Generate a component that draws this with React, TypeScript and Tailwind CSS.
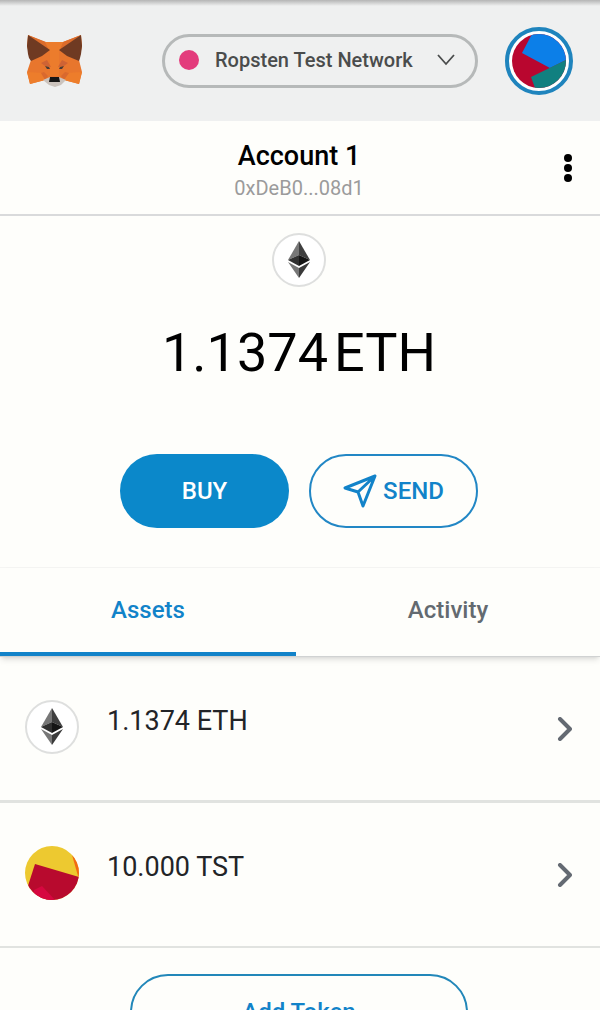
import React, { useState } from "react";

interface Asset {
  id: string;
  balance: string;
  icon: React.ReactNode;
}

const FoxLogo = () => (
  <svg viewBox="0 0 62 58" className="h-[58px] w-[62px]" aria-hidden="true">
    <polygon points="4,3 21,10 39,10 57,3 58,14 55,28 58,40 55,52 40,48 36,53 26,53 21,48 6,52 3,40 7,28 3,14" fill="#e8762d" />
    <polygon points="4,3 22,10 26,19" fill="#dc6c2b" />
    <polygon points="57,3 39,10 35,19" fill="#dc6c2b" />
    <polygon points="21,10 39,10 35,20 35,44 26,44 26,20" fill="#ec7c2c" />
    <polygon points="4,3 26,18 18,24 7,29 5,26 4,22 3,14" fill="#6f3a22" />
    <polygon points="57,3 35,18 43,24 55,29 56,26 57,22 58,14" fill="#6f3a22" />
    <polygon points="3,40 19,41 21,48 6,52" fill="#ed7d2b" />
    <polygon points="58,40 42,41 40,48 55,52" fill="#ed7d2b" />
    <polygon points="17,31 23,28 27,35 21,34" fill="#cf6334" />
    <polygon points="44,31 38,28 34,35 40,34" fill="#cf6334" />
    <polygon points="17,41 20,40 24,44 21,48" fill="#d9692e" />
    <polygon points="45,41 41,40 37,44 40,48" fill="#d9692e" />
    <polygon points="21,34 25,35 26,37 23,37" fill="#4b3b34" />
    <polygon points="40,34 36,35 35,37 38,37" fill="#4b3b34" />
    <polygon points="19,48 26,45 35,45 42,48 37,53 31,55 25,53" fill="#cbc3bd" />
    <polygon points="26,45 35,45 36,50 25,50" fill="#161616" />
  </svg>
);

const EthIcon = () => (
  <span className="flex size-[54px] shrink-0 items-center justify-center rounded-full border-2 border-[#dedfde] bg-white">
    <svg viewBox="0 0 24 38" className="h-[38px] w-6" aria-hidden="true">
      <polygon points="12,0 12,14 1,19" fill="#777777" />
      <polygon points="12,0 23,19 12,14" fill="#3f3f3f" />
      <polygon points="1,19 12,14 12,25" fill="#303030" />
      <polygon points="23,19 12,14 12,25" fill="#151515" />
      <polygon points="1,21 12,27 12,37" fill="#777777" />
      <polygon points="23,21 12,27 12,37" fill="#3a3a3a" />
    </svg>
  </span>
);

const TokenIcon = () => (
  <svg viewBox="0 0 54 54" className="size-[54px] shrink-0 rounded-full" aria-hidden="true">
    <rect width="54" height="54" fill="#edc930" />
    <polygon points="47,9 54,12 54,31 53,30" fill="#f26a12" />
    <polygon points="10,18 54,31 54,54 0,54 1,46" fill="#b80a2e" />
    <polygon points="17,40 30,54 8,54 9,44" fill="#d60740" />
  </svg>
);

const AccountIcon = () => (
  <svg viewBox="0 0 54 54" className="size-[54px] rounded-full" aria-hidden="true">
    <rect width="54" height="54" fill="#b9062f" />
    <polygon points="20,0 54,0 54,26 38,34 10,19" fill="#0c7fe8" />
    <polygon points="54,26 19,43 23,54 54,54" fill="#118080" />
  </svg>
);

const assets: Asset[] = [
  { id: "eth", balance: "1.1374 ETH", icon: <EthIcon /> },
  { id: "tst", balance: "10.000 TST", icon: <TokenIcon /> },
];

const App = () => {
  const [tab, setTab] = useState("assets");

  const tabClass = (name: string) =>
    tab === name
      ? "border-b-4 border-[#1283c9] text-[#1283c9]"
      : "border-b-4 border-transparent text-[#636a70]";

  return (
    <div className="flex h-screen flex-col overflow-hidden bg-[#fefefb] font-[Roboto,sans-serif] text-black">
      {/* Top bar */}
      <header className="flex h-[121px] shrink-0 items-center justify-between bg-[#eff0f0] bg-linear-to-b from-[#b5b5b5] to-[#eff0f0] to-[6px] pr-[27px] pl-6">
        <FoxLogo />
        <div className="flex items-center gap-[27px]">
          <button className="flex h-[54px] w-[316px] items-center rounded-full border-3 border-[#b6b9b9] pr-5 pb-[2px] pl-[14px] text-[20px] font-medium text-[#4a4c4c]">
            <span className="mr-4 size-5 rounded-full bg-[#e33b7c]" />
            Ropsten Test Network
            <svg viewBox="0 0 18 12" className="ml-auto h-3 w-[18px]" fill="none" stroke="#4a4c4c" strokeWidth="1.8" aria-hidden="true">
              <path d="M1 1l8 9 8-9" />
            </svg>
          </button>
          <button aria-label="My accounts" className="flex size-[68px] items-center justify-center rounded-full border-4 border-[#1f84bd] bg-white">
            <AccountIcon />
          </button>
        </div>
      </header>

      {/* Selected account */}
      <section className="grid h-[95px] shrink-0 grid-cols-[1fr_auto_1fr] items-center border-b-2 border-[#d9dadb] pr-[22px] pl-5">
        <button className="col-start-2 pt-2 text-center">
          <span className="block text-[27px] leading-8 font-medium">Account 1</span>
          <span className="block text-[20px] leading-8 text-[#9b9b9b]">0xDeB0...08d1</span>
        </button>
        <button aria-label="Account options" className="justify-self-end pr-[6px] pl-2">
          <svg viewBox="0 0 8 28" className="h-7 w-2" aria-hidden="true">
            <circle cx="4" cy="4" r="4" />
            <circle cx="4" cy="14" r="4" />
            <circle cx="4" cy="24" r="4" />
          </svg>
        </button>
      </section>

      {/* Balance */}
      <section className="flex h-[352px] shrink-0 flex-col items-center border-b border-[#f5f5f3] pt-[17px] pr-[2px]">
        <EthIcon />
        <p className="mt-[34px] flex gap-[6px] text-[54px] leading-[64px]">
          <span>1.1374</span>
          <span>ETH</span>
        </p>
        <div className="mt-[69px] flex gap-5 text-[24px] font-medium">
          <button className="h-[74px] w-[169px] rounded-full bg-[#0b88ca] text-white">BUY</button>
          <button className="flex h-[74px] w-[169px] items-center justify-center gap-[6px] rounded-full border-2 border-[#2287c5] text-[#1283c9]">
            <svg viewBox="0 0 34 34" className="size-[34px]" fill="none" stroke="currentColor" strokeWidth="3" strokeLinejoin="round" aria-hidden="true">
              <path d="M32 2L2 14l13 4 5 14zM32 2L15 18" />
            </svg>
            SEND
          </button>
        </div>
      </section>

      {/* Tabs */}
      <div role="tablist" className="grid h-[89px] shrink-0 grid-cols-[37fr_38fr] border-b border-[#d0d2d2] text-[24px] font-medium shadow-md shadow-black/10">
        <button role="tab" aria-selected={tab === "assets"} onClick={() => setTab("assets")} className={tabClass("assets")}>
          Assets
        </button>
        <button role="tab" aria-selected={tab === "activity"} onClick={() => setTab("activity")} className={tabClass("activity")}>
          Activity
        </button>
      </div>

      {tab === "assets" && (
        <>
          <ul className="shrink-0">
            {assets.map((asset) => (
              <li key={asset.id} className="border-b-3 border-[#e1e3e0] last:border-b-2">
                <button className="flex h-[143px] w-full items-center pr-7 pl-[25px] text-left text-[27px] text-[#222427]">
                  <span className="flex items-center gap-7 pb-1">
                    {asset.icon}
                    <span className="pb-[10px]">{asset.balance}</span>
                  </span>
                  <svg viewBox="0 0 15 24" className="ml-auto h-6 w-[15px]" fill="none" stroke="#646a72" strokeWidth="4" strokeLinecap="round" strokeLinejoin="round" aria-hidden="true">
                    <path d="M3 2l10 10-10 10" />
                  </svg>
                </button>
              </li>
            ))}
          </ul>
          <div className="flex shrink-0 justify-center py-[26px] pr-[2px]">
            <button className="h-[76px] w-[338px] rounded-full border-2 border-[#2287b9] text-[24px] font-medium text-[#1283c9]">
              Add Token
            </button>
          </div>
        </>
      )}
    </div>
  );
};

export default App;
